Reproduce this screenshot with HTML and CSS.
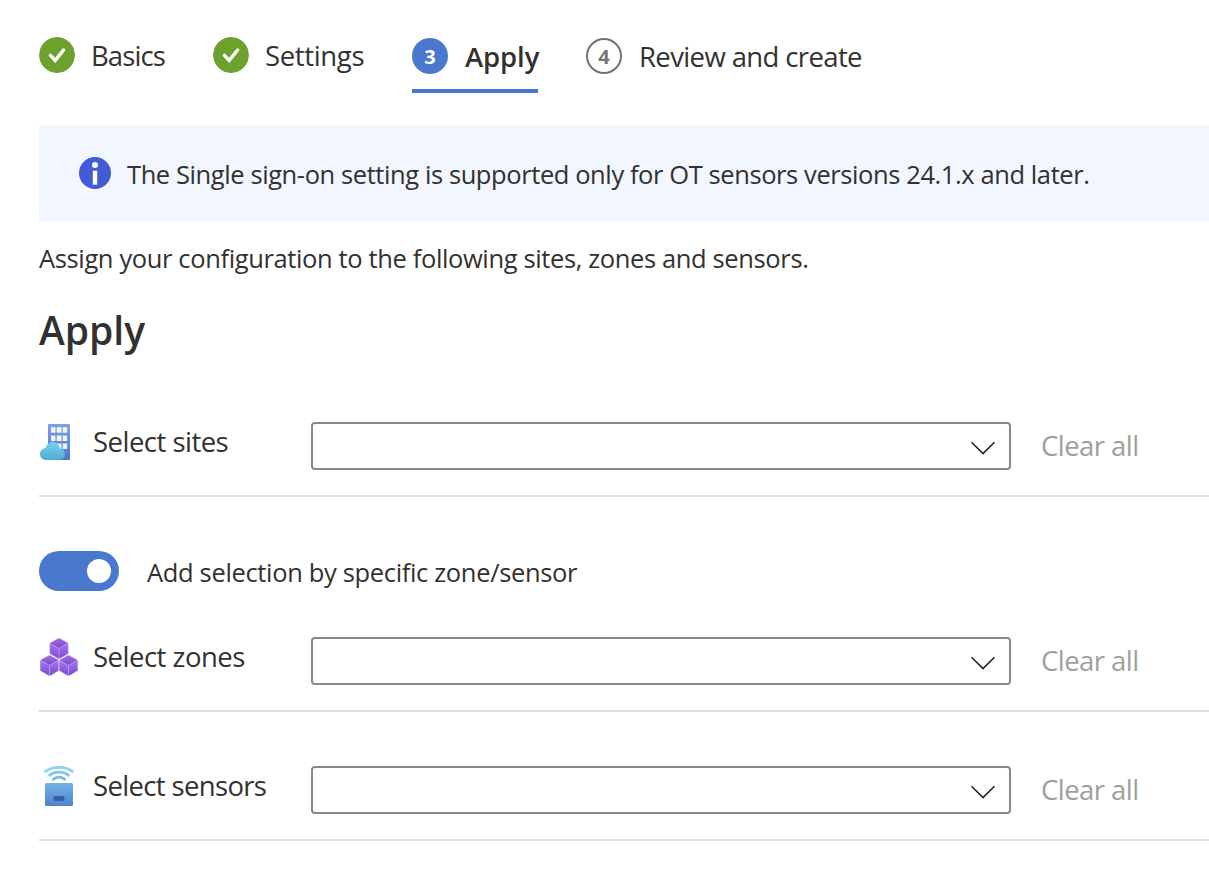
FILE: index.html
```html
<!DOCTYPE html>
<html lang="en">
<head>
<meta charset="utf-8">
<title>Apply settings</title>
<link rel="stylesheet" href="styles.css">
</head>
<body>
<main class="page">
  <nav class="steps">
    <div class="step step-basics">
      <svg class="badge badge-done" viewBox="0 0 36 36"><circle cx="18" cy="18" r="18" fill="#6ba12c"/><path d="M11.4 18.4l4.800 5 8.400-10.400" fill="none" stroke="#fff" stroke-width="3.4" stroke-linecap="round"/></svg>
      <span class="step-label t-basics">Basics</span>
    </div>
    <div class="step step-settings">
      <svg class="badge badge-done" viewBox="0 0 36 36"><circle cx="18" cy="18" r="18" fill="#6ba12c"/><path d="M11.4 18.4l4.800 5 8.400-10.400" fill="none" stroke="#fff" stroke-width="3.4" stroke-linecap="round"/></svg>
      <span class="step-label t-settings">Settings</span>
    </div>
    <div class="step step-apply">
      <span class="badge badge-current">3</span>
      <span class="step-label t-apply">Apply</span>
    </div>
    <div class="step step-review">
      <span class="badge badge-next">4</span>
      <span class="step-label t-review">Review and create</span>
    </div>
  </nav>

  <section class="banner">
    <svg class="info" viewBox="0 0 32 32"><circle cx="16" cy="16" r="16" fill="#415bd5"/><circle cx="16" cy="8" r="3" fill="#fff"/><rect x="13.8" y="13.7" width="4.4" height="14" fill="#fff"/></svg>
    <span class="t-banner">The Single sign-on setting is supported only for OT sensors versions 24.1.x and later.</span>
  </section>

  <p class="intro">Assign your configuration to the following sites, zones and sensors.</p>
  <h1 class="heading">Apply</h1>

  <section class="row">
    <svg class="row-icon" viewBox="0 0 40 40">
      <defs>
        <linearGradient id="tower" x1="0" y1="0" x2="0" y2="1"><stop offset="0" stop-color="#7ba3ea"/><stop offset="1" stop-color="#4a74cf"/></linearGradient>
        <linearGradient id="cloud" x1="0" y1="0" x2="0" y2="1"><stop offset="0" stop-color="#76d2ee"/><stop offset="1" stop-color="#4fabd1"/></linearGradient>
      </defs>
      <rect x="9" y="2" width="22" height="36" rx="1" fill="url(#tower)"/>
      <g fill="#f3f3f5">
        <rect x="12" y="5.2" width="4.500" height="5.500"/><rect x="17.7" y="5.2" width="4.800" height="5.500"/><rect x="23.7" y="5.2" width="4.500" height="5.500"/>
        <rect x="12" y="13.500" width="4.500" height="5.500"/><rect x="17.7" y="13.500" width="4.800" height="5.500"/><rect x="23.7" y="13.500" width="4.500" height="5.500"/>
        <rect x="17.7" y="21.500" width="4.800" height="5.500"/><rect x="23.7" y="21.500" width="4.500" height="5.500"/>
      </g>
      <path d="M7.2 38C3.6 38 1 35.300 1 32c0-3.100 2.300-5.600 5.500-5.900C7.400 22.400 10.200 20 13.700 20c3.700 0 6.700 2.500 7.400 6.600 2.900.4 4.900 2.700 4.900 5.600 0 3.300-2.500 5.800-5.800 5.800z" fill="url(#cloud)"/>
    </svg>
    <span class="row-label t-sites">Select sites</span>
    <div class="select"><svg class="chevron" viewBox="0 0 26 14"><path d="M1.500 1.300L13 12.600 24.500 1.300" fill="none" stroke="#252423" stroke-width="1.600"/></svg></div>
    <span class="clear">Clear all</span>
  </section>

  <div class="toggle-row">
    <span class="toggle"><span class="knob"></span></span>
    <span class="t-toggle">Add selection by specific zone/sensor</span>
  </div>

  <section class="row">
    <svg class="row-icon" viewBox="0 0 40 40">
      <defs>
        <linearGradient id="side" x1="0" y1="0" x2="0" y2="1"><stop offset="0" stop-color="#a678ea"/><stop offset="1" stop-color="#7d47d1"/></linearGradient>
        <linearGradient id="lid" x1="0" y1="0" x2="0" y2="1"><stop offset="0" stop-color="#a172e6"/><stop offset="1" stop-color="#7b45cd"/></linearGradient>
        <g id="cube">
          <path d="M9.500 0L19 5.300 9.500 10.600 0 5.300z" fill="url(#lid)"/>
          <path d="M0 5.300l9.500 5.300v10.800L0 16z" fill="url(#side)"/>
          <path d="M19 5.300l-9.500 5.300v10.800L19 16z" fill="url(#side)"/>
          <path d="M.3 5.500l9.200 5.100 9.200-5.100M9.500 10.600v10.400" fill="none" stroke="#c2a0f2" stroke-width=".6"/>
          <path d="M9.500 0L19 5.300V16l-9.500 5.400L0 16V5.300z" fill="none" stroke="#fff" stroke-width=".5"/>
        </g>
      </defs>
      <use href="#cube" x="10.500" y=".8"/>
      <use href="#cube" x="1" y="17.800"/>
      <use href="#cube" x="20" y="17.800"/>
    </svg>
    <span class="row-label t-zones">Select zones</span>
    <div class="select"><svg class="chevron" viewBox="0 0 26 14"><path d="M1.500 1.300L13 12.600 24.500 1.300" fill="none" stroke="#252423" stroke-width="1.600"/></svg></div>
    <span class="clear">Clear all</span>
  </section>

  <section class="row row-sensors">
    <svg class="row-icon" viewBox="0 0 40 40">
      <defs>
        <linearGradient id="device" x1="0" y1="0" x2="0" y2="1"><stop offset="0" stop-color="#72b3e6"/><stop offset="1" stop-color="#5380cf"/></linearGradient>
      </defs>
      <g fill="none" stroke-width="2.700">
        <path d="M5.600 6.100Q11.500 1.300 20 1.300t14.400 4.800" stroke="#8ad3f7"/>
        <path d="M9.800 9.900Q13.800 6.200 20 6.200t10.200 3.700" stroke="#80c5f0"/>
        <path d="M13.600 14.300Q15.900 11.100 20 11.100t6.400 3.200" stroke="#76b9ea"/>
      </g>
      <rect x="6" y="17" width="28" height="23" rx="1.500" fill="url(#device)"/>
      <rect x="14.300" y="30" width="11.200" height="5" rx="2" fill="#3c5ba7"/>
    </svg>
    <span class="row-label t-sensors">Select sensors</span>
    <div class="select"><svg class="chevron" viewBox="0 0 26 14"><path d="M1.500 1.300L13 12.600 24.500 1.300" fill="none" stroke="#252423" stroke-width="1.600"/></svg></div>
    <span class="clear">Clear all</span>
  </section>
</main>
</body>
</html>
```
FILE: styles.css
```css
* { box-sizing: border-box; }
body {
  margin: 0;
  background: #fff;
  color: #323130;
  font-family: "Segoe UI", "Open Sans", "Noto Sans", sans-serif;
  overflow: hidden;
}
.page { padding: 37px 0 0 39px; height: 895px; }
.steps { display: flex; height: 56px; }
.step { display: flex; align-items: flex-start; height: 56px; flex: none; white-space: nowrap; }
.step-basics { width: 174px; }
.step-settings { width: 199px; }
.step-apply { width: 126px; margin-right: 48px; border-bottom: 4px solid #4a78cf; }
.badge { width: 36px; height: 36px; flex: none; margin-right: 16px; border-radius: 50%; }
.badge-current, .badge-next {
  display: flex; align-items: center; justify-content: center;
  margin-top: 1px; padding-top: 1px; font-size: 20px; font-weight: 700; line-height: 34px;
}
.badge-current { background: #4a78cf; color: #fff; }
.badge-next { border: 2px solid #767472; color: #767472; }
.step-label { font-size: 27.5px; line-height: 36px; padding-top: 1px; }
.t-basics { letter-spacing: -0.9px; }
.t-settings { letter-spacing: -0.35px; }
.t-apply { font-weight: 600; letter-spacing: -0.1px; }
.t-review { letter-spacing: -0.62px; }
.t-apply, .t-review { padding-top: 2px; padding-left: 1px; }

.banner {
  display: flex; align-items: center; height: 96px; margin-top: 32px;
  padding: 0 0 0 40px; background: #f1f6ff; font-size: 25.5px; white-space: nowrap;
}
.t-banner { padding-top: 1px; letter-spacing: -0.41px; }
.info { width: 32px; height: 32px; margin-right: 16px; flex: none; }
.intro { margin: 19px 0 0; height: 36px; line-height: 36px; font-size: 25.5px; letter-spacing: -0.37px; white-space: nowrap; }
.heading { margin: 24px 0 0; height: 62px; line-height: 60px; font-size: 39px; font-weight: 600; }

.row {
  display: flex; align-items: flex-start; height: 75px; margin-top: 60px;
  border-bottom: 2px solid #e1dfdd; white-space: nowrap; font-size: 27.5px;
}
.row-icon { width: 40px; height: 40px; flex: none; }
.row-label { width: 218px; margin-left: 14px; line-height: 40px; flex: none; }
.t-sites { letter-spacing: -0.52px; }
.t-zones { letter-spacing: -0.5px; }
.t-sensors { letter-spacing: -0.65px; }
.select {
  display: flex; align-items: center; justify-content: flex-end;
  width: 700px; height: 48px; flex: none; padding: 3px 13px 0 0;
  border: 2px solid #8a8886; border-radius: 4px;
}
.chevron { width: 26px; height: 14px; }
.clear { margin-left: 30px; line-height: 48px; color: #a19f9d; letter-spacing: -0.55px; }
.toggle-row { display: flex; align-items: center; height: 40px; margin-top: 54px; font-size: 25.5px; white-space: nowrap; }
.t-toggle { padding-top: 1px; letter-spacing: -0.34px; }
.toggle {
  display: flex; align-items: center; justify-content: flex-end;
  width: 80px; height: 40px; padding-right: 8px; margin-right: 28px; border-radius: 20px; background: #4a78cf;
}
.knob { width: 24px; height: 24px; border-radius: 50%; background: #fff; }
.toggle-row + .row { margin-top: 46px; }
.row-sensors { margin-top: 54px; }
```
